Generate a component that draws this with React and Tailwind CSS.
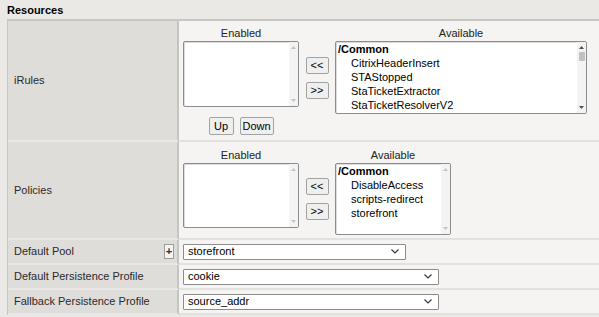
import React from 'react';

const Arrow = ({ up, dark }) => (
  <svg width="5" height="3" viewBox="0 0 5 3">
    <path d={up ? 'M0 3 L2.5 0 L5 3Z' : 'M0 0 L2.5 3 L5 0Z'} fill={dark ? '#505050' : '#c4c4c4'} />
  </svg>
);

const ScrollTrack = ({ dark, thumb }) => (
  <div className="flex w-[9px] flex-col items-center bg-[#f3f3f3] py-[4px]">
    <Arrow up dark={dark} />
    {thumb && <div className="mt-[3px] h-[9px] w-[6px] rounded-[1px] bg-[#c1c1c1]" />}
    <div className="flex-1" />
    <Arrow dark={dark} />
  </div>
);

const ListBox = ({ className, items = [], dark, thumb }) => (
  <div className={`flex overflow-hidden rounded-[2px] border border-[#8c8c8c] bg-white shadow-[inset_1px_1px_0_#dcdcdc] ${className}`}>
    <div className="flex-1 pl-[2px] leading-[14px] text-black">
      {items.map((it, i) =>
        i === 0 ? (
          <div key={it} className="font-bold">{it}</div>
        ) : (
          <div key={it} className="pl-[13px]">{it}</div>
        )
      )}
    </div>
    <ScrollTrack dark={dark} thumb={thumb} />
  </div>
);

const Btn = ({ className, children }) => (
  <div className={`flex items-center justify-center rounded-[2px] border border-[#a2a2a2] bg-[#efefef] leading-none text-black ${className}`}>
    {children}
  </div>
);

const MoveButtons = ({ className }) => (
  <div className={`flex w-[36px] flex-col items-center gap-[8px] ${className}`}>
    <Btn className="h-[17px] w-[23px]">&lt;&lt;</Btn>
    <Btn className="h-[17px] w-[23px]">&gt;&gt;</Btn>
  </div>
);

const Select = ({ className, value }) => (
  <div className={`flex h-[16px] items-center justify-between rounded-[1px] border border-[#8c8c8c] bg-white pl-[4px] pr-[6px] text-black ${className}`}>
    <span className="leading-none">{value}</span>
    <svg width="8" height="5" viewBox="0 0 8 5">
      <path d="M0.5 0.5 L4 4 L7.5 0.5" fill="none" stroke="#333" strokeWidth="1.1" />
    </svg>
  </div>
);

const Row = ({ label, className, labelExtra, children }) => (
  <div className={`flex ${className}`}>
    <div className="flex w-[171px] items-center justify-between border-b-2 border-r-2 border-b-[#e9e7e4] border-r-[#c6c4c0] bg-[#dfddd9] pl-[6px] pr-[3px] text-[#2a2a2a]">
      <span>{label}</span>
      {labelExtra}
    </div>
    <div className="flex-1 border-b-2 border-[#e3e1de] bg-[#f5f4f2] pl-[4px]">{children}</div>
  </div>
);

const App = () => {
  return (
    <div className="h-[317px] w-[599px] overflow-hidden bg-[#ebe9e5] font-['Liberation_Sans',Arial,sans-serif] text-[11px]">
      {/* Section header */}
      <div className="h-[19px] pl-[7px] pt-[3px] font-bold leading-[14px] text-black">Resources</div>

      <div className="ml-[7px] border-l border-t-2 border-[#c8c6c2]">
        {/* iRules */}
        <Row label="iRules" className="h-[121px]">
          <div className="flex items-start pt-[5px]">
            <div className="flex w-[116px] flex-col items-center">
              <div className="h-[15px] leading-[14px] text-[#222]">Enabled</div>
              <ListBox className="h-[66px] w-[116px]" />
              <div className="mt-[10px] flex gap-[6px]">
                <Btn className="h-[18px] w-[25px]">Up</Btn>
                <Btn className="h-[18px] w-[34px]">Down</Btn>
              </div>
            </div>
            <MoveButtons className="mt-[31px]" />
            <div className="flex w-[252px] flex-col items-center">
              <div className="h-[15px] leading-[14px] text-[#222]">Available</div>
              <ListBox
                className="h-[73px] w-[252px]"
                dark
                thumb
                items={['/Common', 'CitrixHeaderInsert', 'STAStopped', 'StaTicketExtractor', 'StaTicketResolverV2']}
              />
            </div>
          </div>
        </Row>

        {/* Policies */}
        <Row label="Policies" className="h-[98px]">
          <div className="flex items-start pt-[6px]">
            <div className="flex w-[116px] flex-col items-center">
              <div className="h-[15px] leading-[14px] text-[#222]">Enabled</div>
              <ListBox className="h-[65px] w-[116px]" />
            </div>
            <MoveButtons className="mt-[30px]" />
            <div className="flex w-[116px] flex-col items-center">
              <div className="h-[15px] leading-[14px] text-[#222]">Available</div>
              <ListBox
                className="h-[72px] w-[116px]"
                items={['/Common', 'DisableAccess', 'scripts-redirect', 'storefront']}
              />
            </div>
          </div>
        </Row>

        <Row
          label="Default Pool"
          className="h-[25px]"
          labelExtra={
            <div className="flex h-[15px] w-[10px] items-center justify-center border border-[#9c9c9c] bg-[#f4f4f4] text-[11px] font-bold leading-none text-[#333]">
              +
            </div>
          }
        >
          <div className="flex h-full items-center">
            <Select className="w-[223px]" value="storefront" />
          </div>
        </Row>

        <Row label="Default Persistence Profile" className="h-[25px]">
          <div className="flex h-full items-center">
            <Select className="w-[256px]" value="cookie" />
          </div>
        </Row>

        <Row label="Fallback Persistence Profile" className="h-[25px]">
          <div className="flex h-full items-center">
            <Select className="w-[256px]" value="source_addr" />
          </div>
        </Row>
      </div>
    </div>
  );
};

export default App;
